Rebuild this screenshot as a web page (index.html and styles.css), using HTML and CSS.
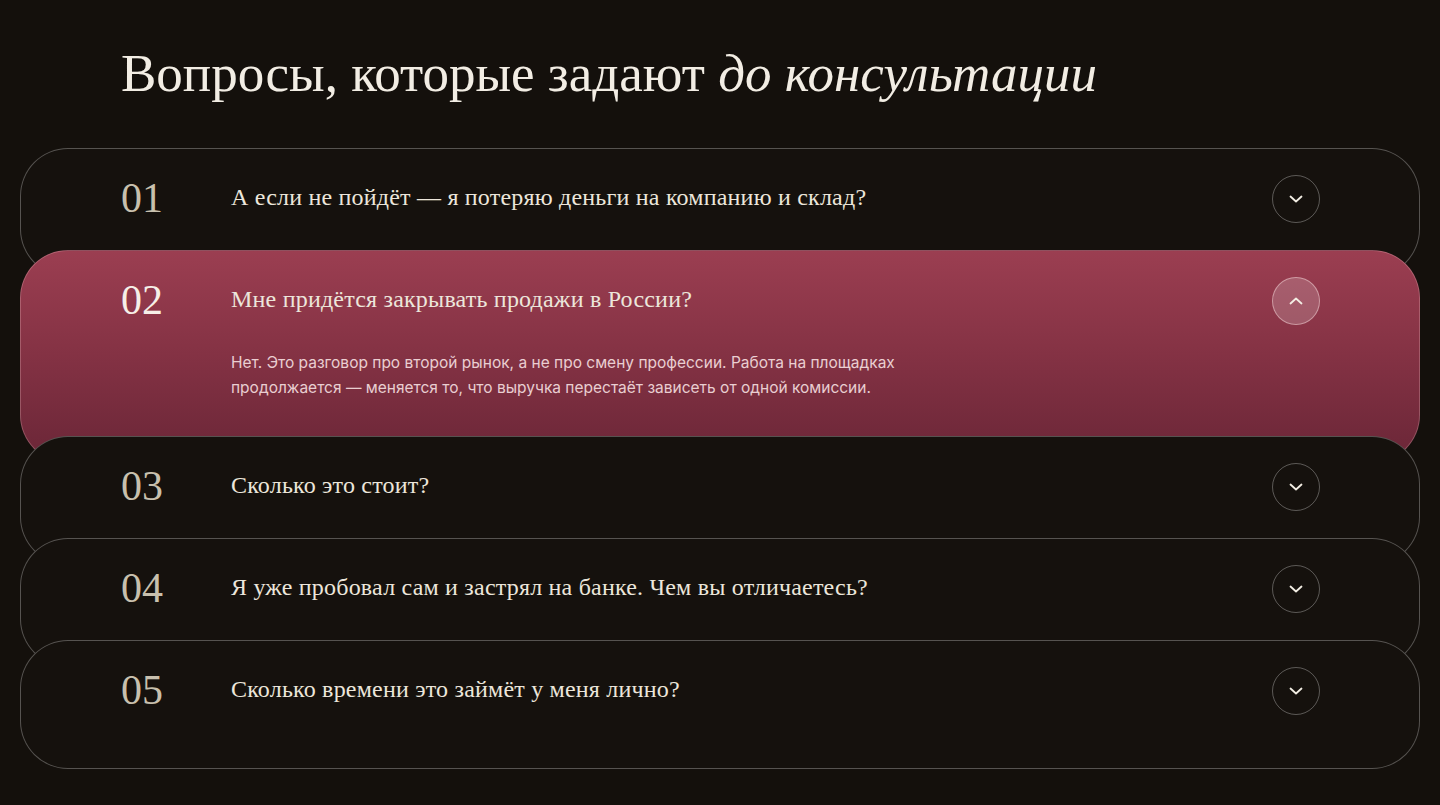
FILE: index.html
```html
<!DOCTYPE html>
<html lang="ru">
<head>
    <meta charset="UTF-8">
    <meta name="viewport" content="width=device-width, initial-scale=1.0">
    <title>Вопросы до консультации</title>
    <link rel="stylesheet" href="styles.css">
</head>
<body>
    <section class="faq">
        <h1 class="faq-title">Вопросы, которые задают <em>до консультации</em></h1>

        <div class="faq-list">
            <div class="faq-item">
                <div class="faq-head">
                    <span class="faq-num">01</span>
                    <span class="faq-q">А если не пойдёт — я потеряю деньги на компанию и склад?</span>
                    <button class="faq-toggle" aria-label="Открыть">
                        <svg width="14" height="8" viewBox="0 0 14 8"><path d="M1.5 1.5 L7 6.5 L12.5 1.5" fill="none" stroke="currentColor" stroke-width="1.8" stroke-linecap="round" stroke-linejoin="round"/></svg>
                    </button>
                </div>
            </div>

            <div class="faq-item is-open">
                <div class="faq-head">
                    <span class="faq-num">02</span>
                    <span class="faq-q">Мне придётся закрывать продажи в России?</span>
                    <button class="faq-toggle" aria-label="Закрыть">
                        <svg width="14" height="8" viewBox="0 0 14 8"><path d="M1.5 6.5 L7 1.5 L12.5 6.5" fill="none" stroke="currentColor" stroke-width="1.8" stroke-linecap="round" stroke-linejoin="round"/></svg>
                    </button>
                </div>
                <p class="faq-answer">Нет. Это разговор про второй рынок, а не про смену профессии. Работа на площадках продолжается — меняется то, что выручка перестаёт зависеть от одной комиссии.</p>
            </div>

            <div class="faq-item">
                <div class="faq-head">
                    <span class="faq-num">03</span>
                    <span class="faq-q">Сколько это стоит?</span>
                    <button class="faq-toggle" aria-label="Открыть">
                        <svg width="14" height="8" viewBox="0 0 14 8"><path d="M1.5 1.5 L7 6.5 L12.5 1.5" fill="none" stroke="currentColor" stroke-width="1.8" stroke-linecap="round" stroke-linejoin="round"/></svg>
                    </button>
                </div>
            </div>

            <div class="faq-item">
                <div class="faq-head">
                    <span class="faq-num">04</span>
                    <span class="faq-q">Я уже пробовал сам и застрял на банке. Чем вы отличаетесь?</span>
                    <button class="faq-toggle" aria-label="Открыть">
                        <svg width="14" height="8" viewBox="0 0 14 8"><path d="M1.5 1.5 L7 6.5 L12.5 1.5" fill="none" stroke="currentColor" stroke-width="1.8" stroke-linecap="round" stroke-linejoin="round"/></svg>
                    </button>
                </div>
            </div>

            <div class="faq-item">
                <div class="faq-head">
                    <span class="faq-num">05</span>
                    <span class="faq-q">Сколько времени это займёт у меня лично?</span>
                    <button class="faq-toggle" aria-label="Открыть">
                        <svg width="14" height="8" viewBox="0 0 14 8"><path d="M1.5 1.5 L7 6.5 L12.5 1.5" fill="none" stroke="currentColor" stroke-width="1.8" stroke-linecap="round" stroke-linejoin="round"/></svg>
                    </button>
                </div>
            </div>
        </div>
    </section>
</body>
</html>
```

FILE: styles.css
```css
body {
    margin: 0;
    background-color: #14100c;
    font-family: "Liberation Serif", "DejaVu Serif", serif;
    color: #ece6db;
}

.faq {
    padding: 41px 20px 36px;
}

.faq-title {
    margin: 0 0 42px 101px;
    font-size: 53px;
    font-weight: 400;
    line-height: 65px;
    color: #f2ede4;
}

.faq-title em {
    font-style: italic;
}

.faq-item {
    position: relative;
    background-color: #15110d;
    border: 1px solid rgba(255, 255, 255, 0.28);
    border-radius: 48px;
    padding: 26px 99px 53px 100px;
    margin-top: -27px;
}

.faq-item:first-child {
    margin-top: 0;
}

.faq-item.is-open {
    background: linear-gradient(180deg, #9b3e51 0%, #863345 45%, #6a2637 100%);
    border-color: rgba(255, 210, 215, 0.25);
    padding-bottom: 62px;
}

.faq-head {
    display: flex;
    align-items: center;
}

.faq-num {
    width: 110px;
    flex-shrink: 0;
    font-size: 42px;
    line-height: 46px;
    padding-bottom: 2px;
    color: #c8c0ae;
}

.is-open .faq-num {
    color: #f6efe8;
}

.faq-q {
    flex: 1;
    font-size: 24px;
    letter-spacing: 0.2px;
    padding-bottom: 4px;
    color: #ece6db;
}

.faq-toggle {
    width: 48px;
    height: 48px;
    flex-shrink: 0;
    display: flex;
    align-items: center;
    justify-content: center;
    padding: 0;
    border: 1px solid rgba(255, 255, 255, 0.3);
    border-radius: 50%;
    background: transparent;
    color: #f3eee4;
    cursor: pointer;
}

.is-open .faq-toggle {
    background: rgba(255, 255, 255, 0.18);
    border-color: rgba(255, 230, 230, 0.45);
}

.faq-answer {
    margin: 25px 0 0 110px;
    max-width: 700px;
    font-family: Inter, "Noto Sans", sans-serif;
    font-size: 15.5px;
    line-height: 25px;
    color: rgba(255, 236, 236, 0.85);
}
```
